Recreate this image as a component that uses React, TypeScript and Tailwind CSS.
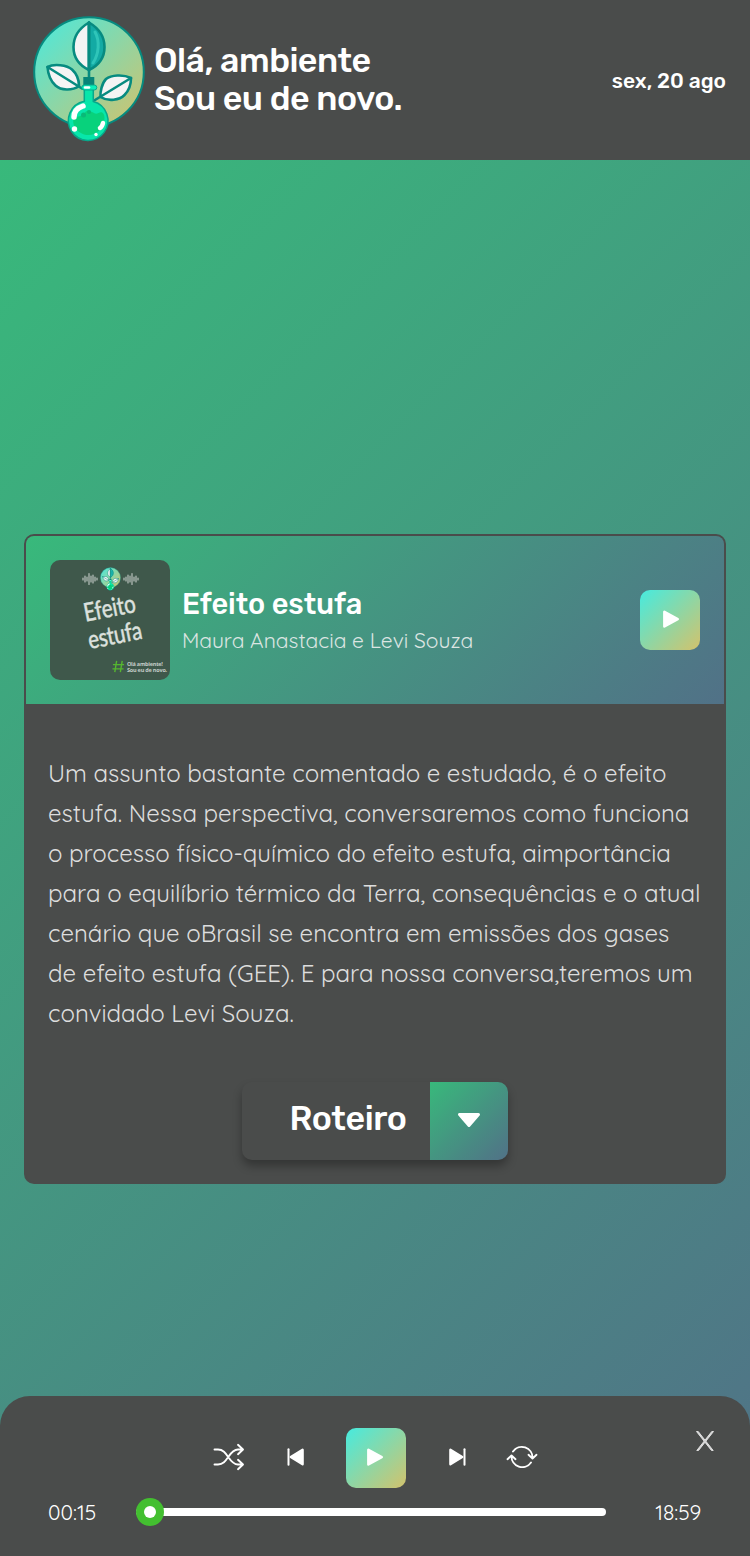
import { useLayoutEffect, useRef, useState } from "react";

type FitProps = { text: string; width: number; className?: string };

/* One line of text, tracked so that it fills the given width. */
function FitLine({ text, width, className = "" }: FitProps) {
  const ref = useRef<HTMLSpanElement>(null);
  const [spacing, setSpacing] = useState(0);
  useLayoutEffect(() => {
    if (!ref.current) return;
    const natural = ref.current.offsetWidth;
    setSpacing((s) => s + (width - natural) / text.length);
  }, [text, width]);
  return (
    <span className={`block w-max whitespace-nowrap ${className}`}>
      <span ref={ref} style={{ letterSpacing: `${spacing}px` }}>{text}</span>
    </span>
  );
}

const heading = "font-[Rubik,Roboto,sans-serif] font-medium text-white";
const body = "font-[Quicksand,Lato,sans-serif] font-normal";
const pageGradient = "bg-[linear-gradient(135deg,#38b97b,#517187)]";

const summary: [string, number][] = [
  ["Um assunto bastante comentado e estudado, é o efeito", 618],
  ["estufa. Nessa perspectiva, conversaremos como funciona", 641],
  ["o processo físico-químico do efeito estufa, aimportância", 623],
  ["para o equilíbrio térmico da Terra, consequências e o atual", 653],
  ["cenário que oBrasil se encontra em emissões dos gases", 621],
  ["de efeito estufa (GEE). E para nossa conversa,teremos um", 645],
  ["convidado Levi Souza.", 246],
];

function Logo({ className }: { className: string }) {
  return (
    <svg viewBox="0 0 114 128" className={className}>
      <defs>
        <linearGradient id="disc" x1="0.1" y1="0.1" x2="0.9" y2="0.9">
          <stop offset="0" stopColor="#55e6d4" />
          <stop offset="1" stopColor="#c6c576" />
        </linearGradient>
      </defs>
      <circle cx="57" cy="57" r="54.8" fill="url(#disc)" stroke="#078b80" strokeWidth="2" />
      <g stroke="#078b80" strokeWidth="2.6" strokeLinejoin="round" strokeLinecap="round">
        <path d="M57 7.500C46 14 41.500 23 41.500 32c0 10 5 18 15.500 23z" fill="#f4f4f4" />
        <path d="M57 7.500C68 14 72.500 23 72.500 32c0 10-5 18-15.500 23z" fill="#13aaa4" />
        <path d="M63 17c5 9 4 22-2 31" fill="none" stroke="#2fc5b9" strokeWidth="3" />
        <path d="M57 7.500V64" fill="none" />
        <path d="M15.500 52C22 48.500 35 50 40 54.500c5 4.500 7 11 7 16.500-7 5-18 4.500-23.500-.5-5-4.500-7.500-12-8-18.500z" fill="#f4f4f4" />
        <path d="M15.500 52L50 73.500" fill="none" />
        <path d="M99 63c-8-4-20-3-25 1-4 4-6 13-5.500 18 8 5 19 3 24-2 4-4 6.500-11 6.500-17z" fill="#f4f4f4" />
        <path d="M99 63L63 85" fill="none" />
      </g>
      <path d="M51.300 62h11v9h-11z" fill="#078578" />
      <path d="M52.300 74v12.200A19.800 19.800 0 1 0 61.300 86.500V74z" fill="#08e6aa" stroke="#07a88b" strokeWidth="1.500" />
      <path d="M41.500 103c4-2 6-1 9-3s3-5 7-4 5 4 9 2 6 1 6 5c0 9-7 17-16 17s-17-8-15-17z" fill="#08d27c" />
      <circle cx="51.500" cy="100" r="2.500" fill="#0ab978" />
      <circle cx="57" cy="97" r="2" fill="#0ab978" />
      <rect x="49.800" y="70" width="15" height="5" rx="2.500" fill="#08f0b9" stroke="#07a88b" strokeWidth="1" />
      <path d="M53 72.500h4" stroke="#fff" strokeWidth="2.500" strokeLinecap="round" />
      <path d="M42 102c0-5 3-9 9-11" fill="none" stroke="#fff" strokeWidth="5.500" strokeLinecap="round" />
      <circle cx="42.500" cy="114" r="2.700" fill="#fff" />
      <path d="M68 113c2-1 2.500-3 3-5" fill="none" stroke="#fff" strokeWidth="4.500" strokeLinecap="round" />
      <circle cx="64" cy="119.500" r="1.700" fill="#fff" />
    </svg>
  );
}

function PlayTile({ iconClass = "" }: { iconClass?: string }) {
  return (
    <button className="flex size-[60px] items-center justify-center rounded-[10px] bg-[linear-gradient(135deg,#46ebdf,#d3c26c)]">
      <svg viewBox="0 0 60 60" className={`size-[60px] ${iconClass}`}>
        <path d="M24.400 21.800v14.600L37.700 29.100z" fill="#fff" stroke="#fff" strokeWidth="2.600" strokeLinejoin="round" />
      </svg>
    </button>
  );
}

function Wave({ className = "" }: { className?: string }) {
  return (
    <svg viewBox="0 0 16 14" className={`h-[14px] w-4 ${className}`}>
      <path d="M1 6v2M3 4v6M5 5v4M7 1.500v11M9 4v6M11 3v8M13 5v4M15 6v2" stroke="#c5cdc8" strokeWidth="1.100" strokeLinecap="round" />
    </svg>
  );
}

function Cover() {
  return (
    <div className="flex size-[120px] shrink-0 flex-col overflow-hidden rounded-[10px] bg-[#3f584b] pt-[7px]">
      <div className="flex items-center justify-center">
        <Wave />
        <Logo className="mx-0.5 h-6 w-[21px]" />
        <Wave className="-scale-x-100" />
      </div>
      <div className="mt-[9px] flex -rotate-[11deg] scale-y-125 flex-col items-center pl-1 font-[Lato,sans-serif] text-[20.500px] font-medium leading-[21.500px] text-[#dce0dd] [-webkit-text-stroke:0.3px_#dce0dd]">
        <FitLine text="Efeito" width={52} />
        <FitLine text="estufa" width={54} />
      </div>
      <div className="mt-[17px] flex items-center justify-end pr-[3px]">
        <svg viewBox="0 0 14 14" className="mr-[2px] size-[13px]">
          <path d="M5 1L3 13M11 1L9 13M1 5h12M.5 9.500h12" stroke="#55b630" strokeWidth="1.500" />
        </svg>
        <div className="font-['Open_Sans',sans-serif] text-[5.500px] font-bold leading-[6px] text-[#c5cdc8]">
          <FitLine text="Olá ambiente!" width={36} />
          <FitLine text="Sou eu de novo." width={40} />
        </div>
      </div>
    </div>
  );
}

function Skip({ className = "" }: { className?: string }) {
  return (
    <svg viewBox="0 0 18 18" className={`size-[18px] ${className}`}>
      <path d="M1.500 1.200v15.600" stroke="#fff" strokeWidth="2" strokeLinecap="round" />
      <path d="M3.800 9L15.600 1.800v14.400z" fill="#fff" stroke="#fff" strokeWidth="2.400" strokeLinejoin="round" />
    </svg>
  );
}

export default function App() {
  return (
    <div className="flex h-[1556px] w-[750px] flex-col overflow-hidden">
      <header className="flex h-40 shrink-0 bg-[#4a4c4b] pr-6">
        <Logo className="ml-8 mt-[15px] h-32 w-[114px]" />
        <h1 className={`ml-2 mt-[42px] text-[34px] leading-[38px] ${heading}`}>
          <FitLine text="Olá, ambiente" width={217} />
          <FitLine text="Sou eu de novo." width={248} />
        </h1>
        <div className={`ml-auto mt-[68px] text-[21px] leading-[26px] ${heading}`}>
          <FitLine text="sex, 20 ago" width={114} />
        </div>
      </header>

      <div className={`flex flex-1 flex-col ${pageGradient}`}>
        <main className="flex-1 px-6 pt-[374px]">
          <article className="h-[650px] overflow-hidden rounded-[10px] border-2 border-[#4a4c4b] bg-[#4a4c4b]">
            <div className={`flex h-[168px] items-center px-6 ${pageGradient}`}>
              <Cover />
              <div className="ml-3">
                <h2 className={`text-[29px] leading-[34px] ${heading}`}>
                  <FitLine text="Efeito estufa" width={180} />
                </h2>
                <p className={`mt-[5px] text-[21px] leading-[28px] text-[#dce5e2] ${body}`}>
                  <FitLine text="Maura Anastacia e Levi Souza" width={291} />
                </p>
              </div>
              <div className="ml-auto">
                <PlayTile />
              </div>
            </div>
            <p className={`h-[330px] px-[22px] pt-[49px] text-[24px] leading-[40px] text-[#dddddd] ${body}`}>
              {summary.map(([text, width]) => (
                <FitLine key={text} text={text} width={width} />
              ))}
            </p>
            <button className="mx-auto mt-12 flex h-[78px] w-[266px] overflow-hidden rounded-[10px] shadow-[0_6px_10px_rgba(0,0,0,0.3)]">
              <span className={`flex-1 pl-[47.500px] pt-4 text-[34px] leading-[42px] ${heading}`}>
                <FitLine text="Roteiro" width={117} />
              </span>
              <span className={`flex size-[78px] items-center justify-center ${pageGradient}`}>
                <svg viewBox="0 0 24 16" className="h-4 w-6 -translate-y-px">
                  <path d="M2.500 2.500h19L12 13.500z" fill="#fff" stroke="#fff" strokeWidth="3" strokeLinejoin="round" />
                </svg>
              </span>
            </button>
          </article>
        </main>

        <footer className="relative h-40 shrink-0 rounded-t-[30px] bg-[#4a4c4b]">
          <svg viewBox="0 0 20 22" className="absolute right-[35px] top-[34px] h-[22px] w-5">
            <path d="M1.500 1.500h1.700l15 19h-1.700zM18.500 1.500h-1.700l-15 19h1.700z" fill="#ddd" stroke="#ddd" strokeWidth="1" />
          </svg>
          <div className="flex items-center pl-[213px] pt-8">
            <svg viewBox="0 0 32 28" className="h-7 w-8 -translate-y-px" fill="none" stroke="#fff" strokeWidth="1.900" strokeLinecap="round" strokeLinejoin="round">
              <path d="M1.500 6.500H5c5 0 7.500 3.500 10.200 7.500s5.300 7.500 9.800 7.500h4.500M1.500 21.500H5c5 0 7.500-3.500 10.200-7.500s5.300-7.500 9.800-7.500h4.500M25 1.800l5 4.700-5 4.700M25 16.800l5 4.700-5 4.700" />
            </svg>
            <Skip className="ml-[42px] -translate-y-px" />
            <div className="ml-[41px]">
              <PlayTile iconClass="-translate-x-0.5" />
            </div>
            <Skip className="ml-[42px] -translate-y-px -scale-x-100" />
            <svg viewBox="0 0 32 28" className="ml-10 h-7 w-8 -translate-y-px" fill="none" stroke="#fff" strokeWidth="1.900" strokeLinecap="round" strokeLinejoin="round">
              <path d="M7 8.500A10.700 10.700 0 0 1 26.500 15M22.500 11.800l4 3.800 4-3.800M25 19.500A10.700 10.700 0 0 1 5.500 13M9.500 16.200l-4-3.800-4 3.800" />
            </svg>
          </div>
          <div className={`flex h-12 items-center pl-12 text-[21px] text-white ${body}`}>
            <FitLine text="00:15" width={48} className="translate-y-px" />
            <div className="ml-10 flex h-2 w-[470px] items-center rounded-full bg-white">
              <span className="flex size-7 items-center justify-center rounded-full bg-[#43bf30]">
                <span className="size-3 rounded-full bg-white" />
              </span>
            </div>
            <FitLine text="18:59" width={46} className="ml-[49px] translate-y-px" />
          </div>
        </footer>
      </div>
    </div>
  );
}
